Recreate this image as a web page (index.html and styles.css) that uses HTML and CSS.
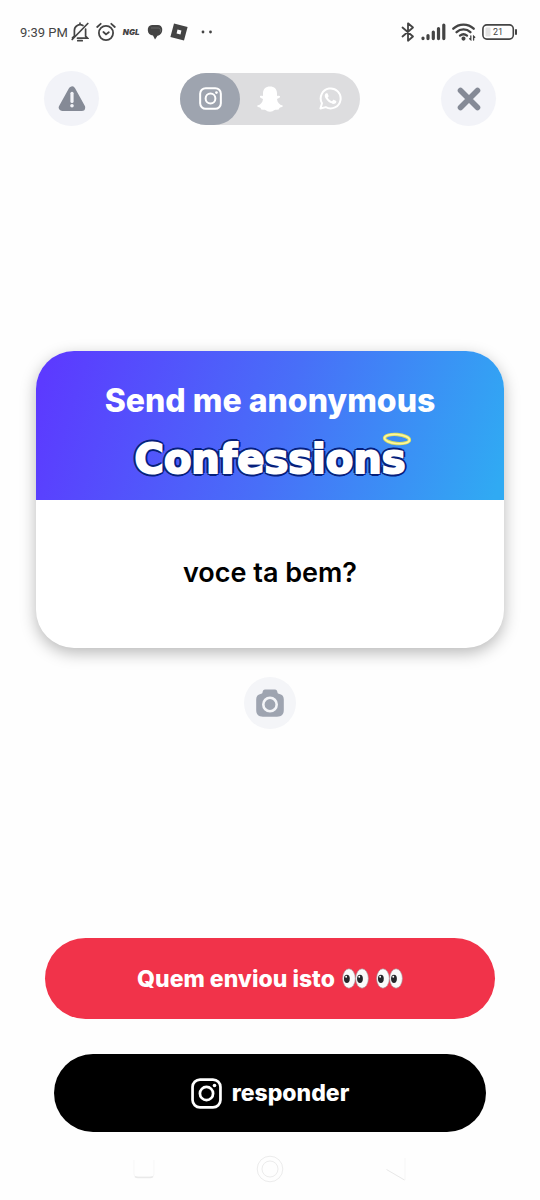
FILE: index.html
```html
<!DOCTYPE html>
<html lang="pt-BR">
<head>
<meta charset="utf-8">
<meta name="viewport" content="width=device-width, initial-scale=1">
<title>Confessions</title>
<link rel="stylesheet" href="styles.css">
</head>
<body>
<svg class="defs" aria-hidden="true">
  <symbol id="instagram" viewBox="0 0 24 24">
    <rect x="1.2" y="1.2" width="21.6" height="21.6" rx="5.8" fill="none" stroke="currentColor" stroke-width="2.1"/>
    <circle cx="12" cy="12" r="5.1" fill="none" stroke="currentColor" stroke-width="2.1"/>
    <circle cx="18.2" cy="5.8" r="1.4" fill="currentColor"/>
  </symbol>
  <symbol id="eyes" viewBox="0 0 26 20">
    <g fill="#fafafa" stroke="#a59a9e" stroke-width=".6">
      <ellipse cx="6.7" cy="10" rx="6.1" ry="9.3"/>
      <ellipse cx="19.3" cy="10" rx="6.1" ry="9.3"/>
    </g>
    <ellipse cx="4.7" cy="10.3" rx="2.8" ry="4" fill="#25262a"/>
    <ellipse cx="17.3" cy="10.3" rx="2.8" ry="4" fill="#25262a"/>
    <circle cx="4" cy="8.3" r=".9" fill="#fff"/>
    <circle cx="16.6" cy="8.3" r=".9" fill="#fff"/>
  </symbol>
</svg>

<div class="screen">
  <div class="status">
    <div class="status-left">
      <span class="clock">9:39 PM</span>
      <svg width="18" height="20" viewBox="0 0 18 20" fill="none" stroke="currentColor" stroke-width="1.7" stroke-linecap="round"><path d="M3.4 13V8.2a5.6 5.6 0 0 1 8.5-4.7M14.6 7v7.2l2 2H6.5M9 1.2v1.4M1.2 17.5 16.8 1.5M6.8 18.7h4.4M1.5 15.8l2-2"/></svg>
      <svg width="20" height="20" viewBox="0 0 20 20" fill="none" stroke="currentColor" stroke-width="1.8" stroke-linecap="round"><circle cx="10" cy="11" r="7.1"/><path d="m1.2 5 3.5-3.2M18.8 5l-3.5-3.2M7.4 10l2.6 2.4 2.8-2.2"/></svg>
      <span class="ngl">NGL</span>
      <svg width="16" height="18" viewBox="0 0 16 18" fill="currentColor"><path d="M5 2h6a4.600 4.600 0 0 1 4.200 3.700c.3 4-1.600 6.400-4.700 7L8 16.500 6 12.500C3 12.300 1 10.500.8 7.200.6 4.300 2.200 2.200 5 2Z"/><path d="M4 5h7.400c1.300 0 2 .9 2 2v2" fill="none" stroke="#888" stroke-width=".5"/></svg>
      <svg width="18" height="18" viewBox="0 0 18 18"><path fill="currentColor" fill-rule="evenodd" d="M4 .5 17.6 4 14 17.6.4 14ZM7.500 6.600l-.9 3.900 3.900.9.900-3.900Z"/></svg>
      <svg class="more" width="12" height="4" viewBox="0 0 12 4" fill="currentColor"><circle cx="2" cy="2" r="1.4"/><circle cx="9.5" cy="2" r="1.4"/></svg>
    </div>
    <div class="status-right">
      <svg width="14" height="20" viewBox="0 0 14 20" fill="none" stroke="currentColor" stroke-width="1.8" stroke-linejoin="round" stroke-linecap="round"><path d="m1.5 5.5 10.5 9-5 4.2V1.3l5 4.2-10.5 9"/></svg>
      <svg width="25" height="18" viewBox="0 0 25 18" fill="none" stroke="currentColor" stroke-width="3.2" stroke-linecap="round"><path d="M2 15v.6M7 12.5v3.1M12.3 9v6.6M17.5 5.5v10.1M22.8 2v13.6"/></svg>
      <svg width="24" height="18" viewBox="0 0 24 18" fill="none" stroke="currentColor" stroke-width="2.3" stroke-linecap="round"><path d="M1.3 5.700a14.700 14.700 0 0 1 20.400 0M4.600 9.200a10 10 0 0 1 13.800 0M8 12.600a5.600 5.600 0 0 1 7 0"/><circle cx="11.500" cy="15.600" r=".9" fill="currentColor"/><path stroke-width="1.300" d="M18.800 13v3.700l-1.100-1M21.600 17v-3.700l1.100 1"/></svg>
      <svg width="36" height="16" viewBox="0 0 36 16" role="img" aria-label="21%"><rect x=".9" y=".9" width="30.4" height="14.2" rx="4" fill="none" stroke="currentColor" stroke-width="1.6"/><rect x="3.5" y="3.5" width="5" height="9" rx="1" fill="#e2e2e2"/><path d="M34 6v4" stroke="currentColor" stroke-width="2" stroke-linecap="round"/><text x="16" y="11" text-anchor="middle" class="battery-text">21</text></svg>
    </div>
  </div>

  <header class="top">
    <button class="round" type="button" aria-label="Denunciar">
      <svg width="28" height="26" viewBox="0 0 28 26"><path d="M14 4 4.3 21.5h19.4Z" fill="#858a96" stroke="#858a96" stroke-width="7" stroke-linejoin="round"/><path d="M14 7.3v8.2" stroke="#f2f3f8" stroke-width="3.2" stroke-linecap="round"/><circle cx="14" cy="19.7" r="1.8" fill="#f2f3f8"/></svg>
    </button>
    <div class="tabs">
      <button class="tab active" type="button" aria-label="Instagram" aria-pressed="true"><svg width="23" height="23"><use href="#instagram"/></svg></button>
      <button class="tab" type="button" aria-label="Snapchat" aria-pressed="false"><svg width="26" height="26" viewBox="0 0 26 26"><path fill="#fff" d="M13 .4c4.3 0 7 2.7 7 6.8v2.7c1-.3 2.7-.3 3 .4.5 1.1-1.6 2-3 2.7.3 3.6 2.5 5.7 5.5 6.5.5.2.4.7.1 1.1-.7.8-2.3.9-3.2 1.3-.4.5-.3 1.4-1 1.7-1.1.4-2.4-.2-3.7.3-1.4.6-2.5 1.8-4.7 1.8s-3.3-1.2-4.7-1.8c-1.3-.5-2.6.1-3.7-.3-.7-.3-.6-1.2-1-1.7-.9-.4-2.5-.5-3.2-1.3-.3-.4-.4-.9.1-1.1C3.500 18.700 5.700 16.600 6 13c-1.400-.7-3.500-1.600-3-2.700.3-.7 2-.7 3-.4V7.200C6 3.100 8.700.4 13 .4Z"/></svg></button>
      <button class="tab" type="button" aria-label="WhatsApp" aria-pressed="false"><svg width="23" height="23" viewBox="0 0 24 24"><path fill="#fff" d="M17.472 14.382c-.297-.149-1.758-.867-2.030-.967-.273-.099-.471-.148-.67.150-.197.297-.767.966-.940 1.164-.173.199-.347.223-.644.075-.297-.150-1.255-.463-2.390-1.475-.883-.788-1.480-1.761-1.653-2.059-.173-.297-.018-.458.130-.606.134-.133.298-.347.446-.520.149-.174.198-.298.298-.497.099-.198.050-.371-.025-.520-.075-.149-.669-1.612-.916-2.207-.242-.579-.487-.500-.669-.510-.173-.008-.371-.010-.570-.010-.198 0-.520.074-.792.372-.272.297-1.040 1.016-1.040 2.479 0 1.462 1.065 2.875 1.213 3.074.149.198 2.096 3.200 5.077 4.487.709.306 1.262.489 1.694.625.712.227 1.360.195 1.871.118.571-.085 1.758-.719 2.006-1.413.248-.694.248-1.289.173-1.413-.074-.124-.272-.198-.570-.347z"/><path d="m1.500 22.500 1.600-5.500A10.400 10.400 0 1 1 7.100 21Z" fill="none" stroke="#fff" stroke-width="2.100" stroke-linejoin="round"/></svg></button>
    </div>
    <button class="round" type="button" aria-label="Fechar">
      <svg width="24" height="24" viewBox="0 0 24 24"><path d="m3.500 3.500 17 17M20.500 3.500l-17 17" stroke="#858a96" stroke-width="5.600" stroke-linecap="round"/></svg>
    </button>
  </header>

  <main class="stage">
    <article class="card">
      <div class="card-head">
        <h1 class="prompt">Send me anonymous</h1>
        <div class="wordmark">Confessions
          <svg class="halo" width="30" height="16" viewBox="0 0 30 16" fill="none"><g transform="rotate(5 15 8)"><ellipse cx="15" cy="8" rx="12.500" ry="4.500" stroke="#d5dd62" stroke-width="3.400"/><ellipse cx="15" cy="8" rx="12.500" ry="4.500" stroke="#fff6a0" stroke-width="1.600"/></g></svg>
        </div>
      </div>
      <p class="message">voce ta bem?</p>
    </article>
    <button class="camera" type="button" aria-label="Câmera">
      <svg width="28" height="28" viewBox="0 0 28 28"><path fill="#9ea4b0" d="M9 .5h10c1.500 0 2.200 1 2.500 3 .2 1 .8 1.300 2 1.500 2.900.6 4.300 2.500 4.300 5.500V21c0 4.500-2.300 6.700-6.800 6.700H7C2.500 27.700.2 25.500.2 21V10.500c0-3 1.400-4.900 4.300-5.500 1.200-.2 1.800-.5 2-1.500.3-2 1-3 2.500-3Z"/><circle cx="14" cy="15.500" r="6.700" fill="none" stroke="#f4f5f8" stroke-width="2.600"/></svg>
    </button>
  </main>

  <div class="actions">
    <button class="who" type="button">Quem enviou isto
      <svg width="27" height="21" role="img" aria-label="👀"><use href="#eyes"/></svg>
      <svg width="27" height="21" role="img" aria-label="👀"><use href="#eyes"/></svg>
    </button>
    <button class="reply" type="button"><svg width="31" height="31"><use href="#instagram"/></svg>responder</button>
  </div>

  <nav class="system" aria-label="Sistema">
    <button type="button" aria-label="Recentes"><svg width="22" height="28" viewBox="0 0 22 28" fill="none"><path d="M1 5v14q0 3 3 3h14q3 0 3-3V5" stroke="#f7f7f7"/><path d="M2 21.500q1 1 3 1h12q2 0 3-1" stroke="#e9e9e9" stroke-width="1.500"/></svg></button>
    <button type="button" aria-label="Início"><svg width="28" height="28" viewBox="0 0 28 28" fill="none" stroke="#ececec"><circle cx="14" cy="14" r="12.800"/><circle cx="14" cy="14" r="8"/></svg></button>
    <button type="button" aria-label="Voltar"><svg width="22" height="28" viewBox="0 0 22 28" fill="none"><path d="M20 3v22" stroke="#f6f6f6"/><path d="m1.500 14.500 18 10.500" stroke="#e8e8e8"/></svg></button>
  </nav>
</div>
</body>
</html>
```
FILE: styles.css
```css
* { box-sizing: border-box; }

body {
  margin: 0;
  background: #fefefe;
  color: #000;
  font-family: Inter, "Liberation Sans", sans-serif;
}

button {
  margin: 0;
  padding: 0;
  border: 0;
  background: none;
  color: inherit;
  font: inherit;
  cursor: pointer;
}

svg { display: block; flex: none; }

.defs { position: absolute; width: 0; height: 0; }

.screen {
  display: flex;
  flex-direction: column;
  min-height: 100vh;
}

.status {
  display: flex;
  justify-content: space-between;
  padding: 20px 22px 0 20px;
  color: #444;
}

.status-left,
.status-right {
  display: flex;
  align-items: center;
  height: 24px;
}

.status-left { gap: 7px; }
.status-right { gap: 6px; }

.clock {
  margin-right: -4px;
  font-family: Roboto, sans-serif;
  font-size: 13px;
  white-space: nowrap;
}

.ngl {
  font-size: 8px;
  font-weight: 900;
  font-style: italic;
}

.more { margin-left: 6px; }

.battery-text {
  font-family: Roboto, sans-serif;
  font-size: 9px;
  fill: #444;
}

.top {
  display: flex;
  justify-content: space-between;
  align-items: center;
  padding: 27px 44px 0;
}

.round,
.camera {
  display: grid;
  place-items: center;
  width: 55px;
  height: 55px;
  border-radius: 50%;
  background: #f2f3f8;
}

.tabs {
  display: flex;
  border-radius: 26px;
  background: #dddddf;
}

.tab {
  display: grid;
  place-items: center;
  width: 60px;
  height: 52px;
  border-radius: 26px;
  color: #fff;
}

.active { background: #9ea4af; }

.stage {
  display: flex;
  flex: 1;
  flex-direction: column;
  align-items: center;
  justify-content: center;
  gap: 29px;
  padding: 16px 36px 0;
}

.card {
  width: 100%;
  overflow: hidden;
  border-radius: 38px;
  background: #fff;
  box-shadow: 0 5px 16px rgba(0, 0, 0, 0.28);
}

.card-head {
  display: flex;
  flex-direction: column;
  align-items: center;
  padding: 28px 16px 17px;
  background: linear-gradient(108deg, #5c3aff 3%, #486ff8 52%, #30aaf3 98%);
  color: #fff;
}

.prompt {
  margin: 0;
  font-size: 32px;
  font-weight: 800;
  line-height: 44px;
  text-align: center;
}

.wordmark {
  position: relative;
  margin-top: 12px;
  font-family: "DejaVu Sans", sans-serif;
  font-size: 40px;
  font-weight: 700;
  line-height: 48px;
  -webkit-text-stroke: 2px #fff;
  text-shadow:
    3px 0 #06207c, -3px 0 #06207c, 0 3px #06207c, 0 -3px #06207c,
    2px 2px #06207c, -2px 2px #06207c, 2px -2px #06207c, -2px -2px #06207c;
}

.halo {
  position: absolute;
  top: -4px;
  right: -7px;
}

.message {
  margin: 0;
  padding: 55px 24px 57px;
  font-size: 27px;
  font-weight: 600;
  line-height: 36px;
  text-align: center;
}

.camera {
  width: 52px;
  height: 52px;
  background: #f4f5f8;
}

.actions {
  display: flex;
  flex-direction: column;
  gap: 35px;
  padding: 0 45px;
  color: #fff;
  font-size: 23px;
  font-weight: 800;
}

.who,
.reply {
  display: flex;
  align-items: center;
  justify-content: center;
  border-radius: 41px;
}

.who {
  gap: 7px;
  height: 81px;
  background: #f1334a;
}

.reply {
  gap: 10px;
  height: 78px;
  margin: 0 9px;
  background: #000;
}

.system {
  display: flex;
  justify-content: space-between;
  padding: 23px 133px 17px;
}
```
